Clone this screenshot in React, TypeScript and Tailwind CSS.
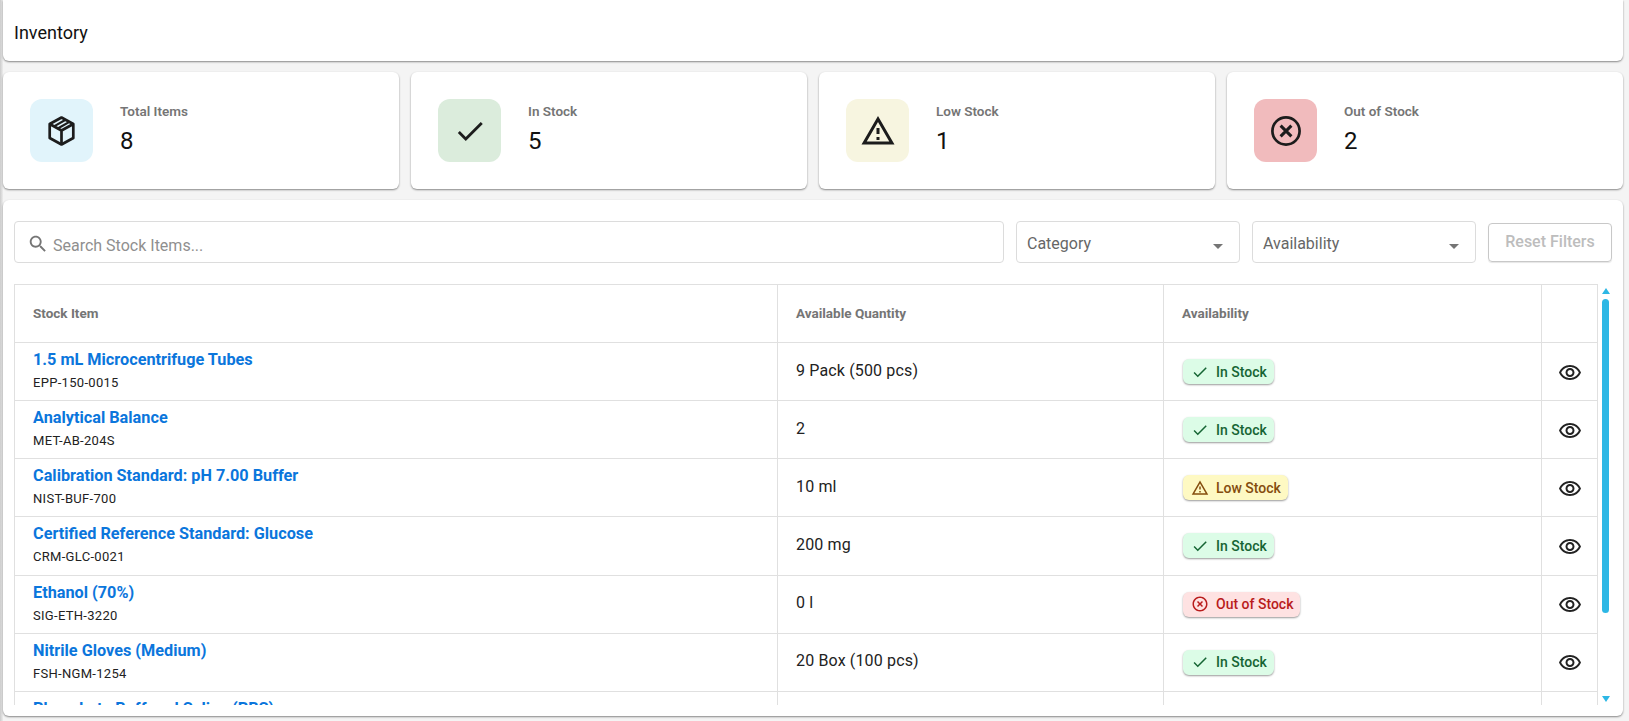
import React from "react";

type Status = "in" | "low" | "out";

interface StockItem {
  name: string;
  sku: string;
  quantity: string;
  status: Status;
}

const items: StockItem[] = [
  { name: "1.5 mL Microcentrifuge Tubes", sku: "EPP-150-0015", quantity: "9 Pack (500 pcs)", status: "in" },
  { name: "Analytical Balance", sku: "MET-AB-204S", quantity: "2", status: "in" },
  { name: "Calibration Standard: pH 7.00 Buffer", sku: "NIST-BUF-700", quantity: "10 ml", status: "low" },
  { name: "Certified Reference Standard: Glucose", sku: "CRM-GLC-0021", quantity: "200 mg", status: "in" },
  { name: "Ethanol (70%)", sku: "SIG-ETH-3220", quantity: "0 l", status: "out" },
  { name: "Nitrile Gloves (Medium)", sku: "FSH-NGM-1254", quantity: "20 Box (100 pcs)", status: "in" },
  { name: "Phosphate Buffered Saline (PBS)", sku: "SIG-PBS-1000", quantity: "12 Bottle", status: "in" },
];

// Material icon paths
const CHECK = "M9 16.17 4.83 12l-1.42 1.41L9 19 21 7l-1.41-1.41z";
const WARNING = "M12 5.99 19.53 19H4.47zM12 2 1 21h22zm1 14h-2v2h2zm0-6h-2v4h2z";
const CROSS =
  "M14.59 8 12 10.59 9.41 8 8 9.41 10.59 12 8 14.59 9.41 16 12 13.41 14.59 16 16 14.59 13.41 12 16 9.41zM12 2C6.47 2 2 6.47 2 12s4.47 10 10 10 10-4.47 10-10S17.53 2 12 2m0 18c-4.41 0-8-3.59-8-8s3.59-8 8-8 8 3.59 8 8-3.59 8-8 8";
const EYE =
  "M12 6c3.79 0 7.17 2.13 8.82 5.5C19.17 14.87 15.79 17 12 17s-7.17-2.13-8.82-5.5C4.83 8.13 8.21 6 12 6m0-2C7 4 2.73 7.11 1 11.5 2.73 15.89 7 19 12 19s9.27-3.11 11-7.5C21.27 7.11 17 4 12 4zm0 5c1.38 0 2.5 1.12 2.5 2.5S13.38 14 12 14s-2.5-1.12-2.5-2.5S10.62 9 12 9m0-2c-2.48 0-4.5 2.02-4.5 4.5S9.52 16 12 16s4.5-2.02 4.5-4.5S14.48 7 12 7z";
const SEARCH =
  "M15.5 14h-.79l-.28-.27C15.41 12.59 16 11.11 16 9.5 16 5.91 13.09 3 9.5 3S3 5.91 3 9.5 5.91 16 9.5 16c1.61 0 3.09-.59 4.23-1.57l.27.28v.79l5 4.99L20.49 19l-4.99-5zm-6 0C7.01 14 5 11.99 5 9.5S7.01 5 9.5 5 14 7.01 14 9.5 11.99 14 9.5 14z";

const MuiIcon: React.FC<{ d: string; className: string }> = ({ d, className }) => (
  <svg viewBox="0 0 24 24" fill="currentColor" className={className}>
    <path d={d} />
  </svg>
);

// Cube with a tape strip across the top face
const BoxIcon = () => (
  <svg viewBox="0 0 27 30" className="h-[30px] w-[27px]" fill="none" stroke="currentColor" strokeWidth={2.7} strokeLinejoin="round">
    <path d="M13.5 1.5 25.3 8v14l-11.8 6.5L1.7 22V8z" />
    <path d="M1.7 8l11.8 6.5L25.3 8M13.5 14.5v14" />
    <path d="M6 10.4 17.6 3.8M9.8 12.5 21.4 5.9" strokeWidth={2.2} />
  </svg>
);

const CircleCrossIcon = () => (
  <svg viewBox="0 0 30 30" className="h-[30px] w-[30px]" fill="none" stroke="currentColor">
    <circle cx="15" cy="15" r="13.6" strokeWidth={2.7} />
    <path d="M9.6 9.6l10.8 10.8M20.4 9.6 9.6 20.4" strokeWidth={3} />
  </svg>
);

const StatCard: React.FC<{ label: string; value: number; tile: string; icon: React.ReactNode }> = ({
  label,
  value,
  tile,
  icon,
}) => (
  <div className="flex flex-1 items-center gap-[27px] rounded-md bg-white pl-[27px] shadow-[0_1px_2px_rgba(0,0,0,0.45)]">
    <div className={`flex h-[63px] w-[63px] items-center justify-center rounded-xl text-[#1c1c1c] ${tile}`}>{icon}</div>
    <div className="flex flex-col pb-[2px]">
      <span className="text-[13.5px] leading-[18px] font-semibold text-[#757575]">{label}</span>
      <span className="mt-[5px] text-2xl leading-[33px] text-[#111]">{value}</span>
    </div>
  </div>
);

const chips: Record<Status, { label: string; box: string; icon: React.ReactNode }> = {
  in: {
    label: "In Stock",
    box: "bg-[#dcfce7] text-[#166534]",
    icon: <MuiIcon d={CHECK} className="h-[18px] w-[18px]" />,
  },
  low: {
    label: "Low Stock",
    box: "bg-[#fef9c3] text-[#854d0e]",
    icon: <MuiIcon d={WARNING} className="h-[18px] w-[18px]" />,
  },
  out: {
    label: "Out of Stock",
    box: "bg-[#fee2e2] text-[#b91c1c]",
    icon: <MuiIcon d={CROSS} className="h-[18px] w-[18px]" />,
  },
};

const StatusChip: React.FC<{ status: Status }> = ({ status }) => {
  const chip = chips[status];
  return (
    <div className="flex pl-[1px]">
      <span
        className={`flex h-[25px] items-center gap-[7px] rounded-md pr-[7px] pl-[8px] text-sm font-medium shadow-[0_1px_2px_rgba(0,0,0,0.4)] ${chip.box}`}
      >
        {chip.icon}
        {chip.label}
      </span>
    </div>
  );
};

const SelectBox: React.FC<{ label: string }> = ({ label }) => (
  <div className="flex h-[42px] w-[224px] items-center justify-between rounded border border-[#dcdcdc] pt-[3px] pr-[16px] pl-[10px] text-base text-[#666]">
    <span>{label}</span>
    <span className="mt-[5px] h-0 w-0 border-x-[5px] border-t-[5px] border-x-transparent border-t-[#757575]" />
  </div>
);

export default function App() {
  return (
    <div className="flex h-screen overflow-hidden bg-[#f4f4f4] font-['Roboto',sans-serif]">
      <div className="w-[3px] shrink-0 bg-gradient-to-r from-[#cbcbcb] to-[#ececec]" />
      <div className="flex w-[1620px] shrink-0 flex-col gap-[11px] pb-[5px]">
        <div className="flex h-[61px] shrink-0 items-center rounded-b-md bg-white pt-[5px] pl-[11px] text-lg text-[#111] shadow-[0_1px_2px_rgba(0,0,0,0.45)]">
          Inventory
        </div>

        <div className="flex h-[117px] shrink-0 gap-3">
          <StatCard label="Total Items" value={8} tile="bg-[#e1f4fb]" icon={<BoxIcon />} />
          <StatCard
            label="In Stock"
            value={5}
            tile="bg-[#dbecdc]"
            icon={<MuiIcon d={CHECK} className="h-[34px] w-[34px]" />}
          />
          <StatCard
            label="Low Stock"
            value={1}
            tile="bg-[#f7f5e0]"
            icon={<MuiIcon d={WARNING} className="h-[36px] w-[36px]" />}
          />
          <StatCard label="Out of Stock" value={2} tile="bg-[#f1bbbd]" icon={<CircleCrossIcon />} />
        </div>

        <div className="flex min-h-0 flex-1 flex-col rounded-md bg-white pt-[21px] pr-[10px] pb-[11px] pl-[11px] shadow-[0_1px_2px_rgba(0,0,0,0.45)]">
          <div className="mr-[1px] flex h-[42px] shrink-0 items-center gap-3">
            <div className="flex h-[42px] flex-1 items-center gap-[4px] rounded border border-[#dcdcdc] pt-[6px] pl-[12px] text-base text-[#8f8f8f]">
              <MuiIcon d={SEARCH} className="-mt-[2px] h-[22px] w-[22px] text-[#757575]" />
              <span className="mt-[2px]">Search Stock Items...</span>
            </div>
            <SelectBox label="Category" />
            <SelectBox label="Availability" />
            <button className="h-[39px] w-[124px] rounded border border-[#c8c8c8] text-base font-medium text-[#bdbdbd] shadow-[0_1px_1px_rgba(0,0,0,0.1)]">
              Reset Filters
            </button>
          </div>

          <div className="mt-[21px] flex min-h-0 flex-1">
            <div className="min-h-0 flex-1 overflow-hidden">
              <table className="w-full table-fixed border-collapse border-t border-l border-[#e0e0e0]">
                <colgroup>
                  <col className="w-[763px]" />
                  <col className="w-[386px]" />
                  <col className="w-[378px]" />
                  <col />
                </colgroup>
                <thead>
                  <tr className="h-[58px] text-left text-[13.5px] text-[#757575]">
                    <th className="border border-[#e0e0e0] pl-[18px] font-bold">Stock Item</th>
                    <th className="border border-[#e0e0e0] pl-[18px] font-bold">Available Quantity</th>
                    <th className="border border-[#e0e0e0] pl-[18px] font-bold">Availability</th>
                    <th className="border border-[#e0e0e0]" />
                  </tr>
                </thead>
                <tbody>
                  {items.map((item) => (
                    <tr key={item.sku} className="h-[58.15px]">
                      <td className="border border-[#e0e0e0] pl-[18px] align-top">
                        <div className="mt-[6px] text-[16.25px] leading-[22px] font-bold text-[#0b76dc]">{item.name}</div>
                        <div className="mt-[2px] text-[13px] leading-[20px] tracking-[0.3px] text-[#222]">{item.sku}</div>
                      </td>
                      <td className="border border-[#e0e0e0] pb-[2px] pl-[18px] text-base tracking-[0.15px] text-[#222]">
                        {item.quantity}
                      </td>
                      <td className="border border-[#e0e0e0] pl-[18px]">
                        <StatusChip status={item.status} />
                      </td>
                      <td className="border border-[#e0e0e0] text-center">
                        <MuiIcon d={EYE} className="mx-auto mt-[2px] h-6 w-6 text-[#222]" />
                      </td>
                    </tr>
                  ))}
                </tbody>
              </table>
            </div>
            <div className="flex w-[15px] shrink-0 flex-col items-center">
              <span className="mt-[4px] h-0 w-0 border-x-[4px] border-b-[6px] border-x-transparent border-b-[#2db7e5]" />
              <span className="mt-[5px] h-[314px] w-[7px] rounded-full bg-[#2db7e5]" />
              <span className="mt-auto mb-[3px] h-0 w-0 border-x-[4px] border-t-[6px] border-x-transparent border-t-[#2db7e5]" />
            </div>
          </div>
        </div>
      </div>
    </div>
  );
}
